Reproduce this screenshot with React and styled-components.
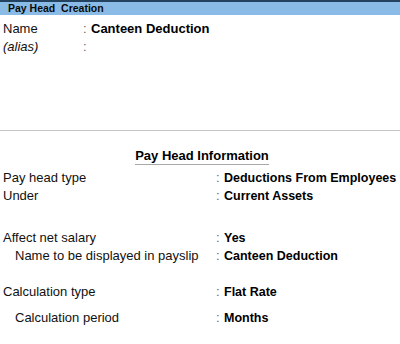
import styled, { createGlobalStyle } from "styled-components";

const GlobalStyle = createGlobalStyle`
  body {
    margin: 0;
    background: #ffffff;
    font-family: "Liberation Sans", Arial, sans-serif;
    color: #000000;
  }
`;

const infoRows = [
  { label: "Pay head type", value: "Deductions From Employees" },
  { label: "Under", value: "Current Assets", gap: 24 },
  { label: "Affect net salary", value: "Yes" },
  { label: "Name to be displayed in payslip", value: "Canteen Deduction", indent: true, gap: 18 },
  { label: "Calculation type", value: "Flat Rate", gap: 8 },
  { label: "Calculation period", value: "Months", indent: true },
];

export default function App() {
  return (
    <Screen>
      <GlobalStyle />
      <TitleBar>Pay Head&nbsp; Creation</TitleBar>
      <TopSection>
        <Row $labelWidth={80}>
          <Label>Name</Label>
          <Colon>:</Colon>
          <Value $size={13}>Canteen Deduction</Value>
        </Row>
        <Row $labelWidth={80}>
          <Label $italic>(alias)</Label>
          <Colon>:</Colon>
          <Value />
        </Row>
      </TopSection>
      <InfoSection>
        <InfoHeading>Pay Head Information</InfoHeading>
        {infoRows.map((row) => (
          <Row key={row.label} $labelWidth={213} $gap={row.gap}>
            <Label $indent={row.indent}>{row.label}</Label>
            <Colon>:</Colon>
            <Value>{row.value}</Value>
          </Row>
        ))}
      </InfoSection>
    </Screen>
  );
}

const Screen = styled.div`
  width: 400px;
  height: 344px;
  overflow: hidden;
  background: #ffffff;
`;

const TitleBar = styled.div`
  height: 13px;
  border-top: 2px solid #23425f;
  background: #89bbe6;
  padding-left: 8px;
  font-size: 10.5px;
  font-weight: bold;
  line-height: 13px;
  color: #0a0a0a;
`;

const TopSection = styled.div`
  height: 110px;
  padding-top: 5px;
  border-bottom: 1px solid #c6c6c6;
`;

const Row = styled.div`
  display: grid;
  grid-template-columns: ${(p) => p.$labelWidth}px 8px 1fr;
  padding-left: 3px;
  height: 18px;
  line-height: 18px;
  font-size: 13px;
  margin-bottom: ${(p) => p.$gap || 0}px;
`;

const Label = styled.div`
  padding-left: ${(p) => (p.$indent ? 12 : 0)}px;
  font-style: ${(p) => (p.$italic ? "italic" : "normal")};
  color: #111111;
  white-space: nowrap;
`;

const Colon = styled.div`
  color: #666666;
`;

const Value = styled.div`
  font-size: ${(p) => p.$size || 12.5}px;
  font-weight: bold;
  color: #000000;
  white-space: nowrap;
`;

const InfoSection = styled.div`
  display: flex;
  flex-direction: column;
  padding-top: 17px;
`;

const InfoHeading = styled.div`
  align-self: center;
  margin-left: 4px;
  font-size: 13px;
  font-weight: bold;
  line-height: 16px;
  border-bottom: 1px solid #a8a8a8;
  margin-bottom: 4px;
`;
